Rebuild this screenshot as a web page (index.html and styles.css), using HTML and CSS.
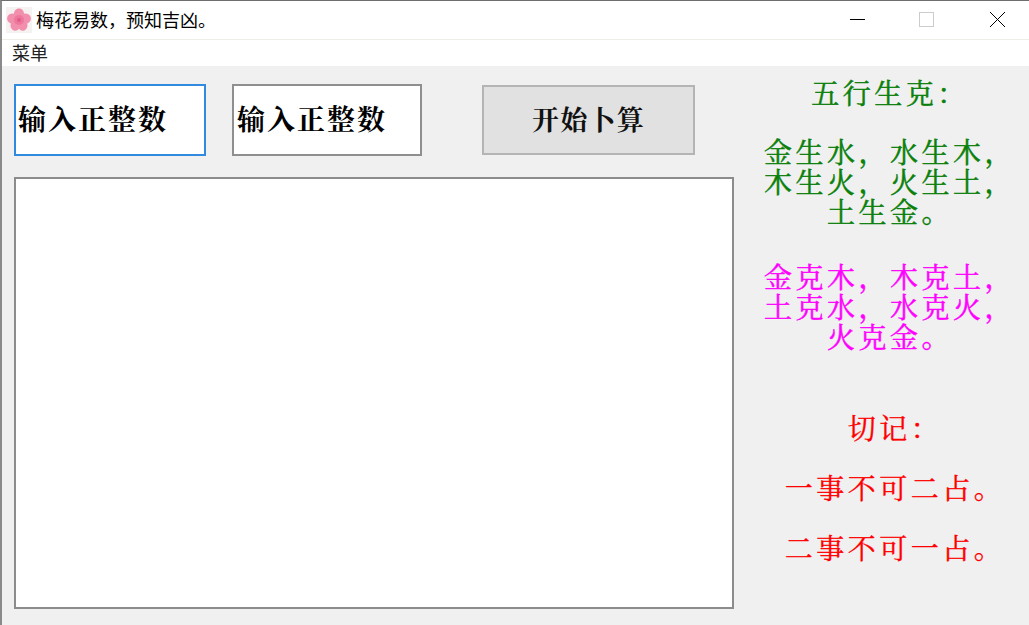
FILE: index.html
```html
<!DOCTYPE html>
<html lang="zh-CN">
<head>
<meta charset="utf-8">
<title>梅花易数，预知吉凶。</title>
<link rel="stylesheet" href="styles.css">
</head>
<body>
<div class="window">
  <header class="titlebar">
    <svg class="app-icon" viewBox="0 0 26 26" width="26" height="26" aria-hidden="true">
      <rect width="26" height="26" fill="#f6f2f2"/>
      <path d="M13 1.500c3.200 0 5 2.600 5 5.200 3-.6 6.200.8 6.800 3.800.6 2.800-1.200 5-3.600 6 .9 2.800-.1 5.800-2.900 6.900-2.200.9-4.200-.2-5.300-1.700-1.100 1.500-3.100 2.600-5.300 1.700-2.800-1.100-3.800-4.100-2.900-6.900-2.400-1-4.200-3.200-3.600-6C1.800 7.500 5 6.100 8 6.700c0-2.600 1.800-5.200 5-5.200z" fill="#f28fad"/>
      <circle cx="13" cy="13" r="5" fill="#ee789c"/>
      <circle cx="13" cy="13" r="2" fill="#e25c8a"/>
    </svg>
    <span class="title-text">梅花易数，预知吉凶。</span>
    <div class="controls">
      <svg class="ctl" viewBox="0 0 70 38" width="70" height="38" aria-hidden="true"><path d="M31 18.500h15" stroke="#000" fill="none"/></svg>
      <svg class="ctl" viewBox="0 0 70 38" width="70" height="38" aria-hidden="true"><rect x="30.500" y="11.500" width="14" height="14" stroke="#ccc" fill="none"/></svg>
      <svg class="ctl" viewBox="0 0 70 38" width="70" height="38" aria-hidden="true"><path d="M31 11l15 15M46 11l-15 15" stroke="#000" fill="none"/></svg>
    </div>
  </header>
  <nav class="menubar"><span class="menu-item">菜单</span></nav>
  <main class="client">
    <section class="work">
      <div class="inputs">
        <input class="num num-focus" type="text" value="输入正整数">
        <input class="num num-second" type="text" value="输入正整数">
        <button class="start" type="button">开始卜算</button>
      </div>
      <textarea class="output"></textarea>
    </section>
    <aside class="notes">
      <p class="note green first">五行生克：</p>
      <p class="note green gap-a">金生水，水生木，<br>木生火，火生土，<br>土生金。</p>
      <p class="note magenta gap-b">金克木，木克土，<br>土克水，水克火，<br>火克金。</p>
      <p class="note red gap-c">切记：</p>
      <p class="note red gap-d">一事不可二占。</p>
      <p class="note red gap-d">二事不可一占。</p>
    </aside>
  </main>
</div>
</body>
</html>
```
FILE: styles.css
```css
* { box-sizing: border-box; }
html, body { margin: 0; height: 100%; overflow: hidden; }
body {
  background: #f0f0f0;
  font-family: "Noto Serif CJK SC", "Liberation Serif", "Noto Sans CJK SC", serif;
}
.window {
  height: 625px;
  display: flex;
  flex-direction: column;
  border-top: 1px solid #6e6e6e;
  border-left: 2px solid #8a8a8a;
}
.titlebar {
  height: 39px;
  flex: none;
  display: flex;
  align-items: center;
  background: #fff;
  border-bottom: 1px solid #eeeee6;
  padding-left: 4px;
}
.app-icon { flex: none; margin-right: 4px; }
.title-text {
  font-family: "Noto Sans CJK SC", sans-serif;
  font-size: 18px;
  color: #000;
  line-height: 36px;
  padding-bottom: 2px;
}
.controls { margin-left: auto; display: flex; }
.ctl { display: block; }
.menubar {
  height: 26px;
  flex: none;
  background: #fff;
  padding-left: 10px;
  display: flex;
  align-items: flex-start;
}
.menu-item {
  font-family: "Noto Sans CJK SC", sans-serif;
  font-size: 18px;
  line-height: 24px;
  color: #222;
}
.client {
  flex: 1;
  min-height: 0;
  display: flex;
  background: #f0f0f0;
}
.work {
  width: 749px;
  flex: none;
  padding: 18px 0 0 12px;
  display: flex;
  flex-direction: column;
  gap: 22px;
}
.inputs { display: flex; align-items: center; height: 72px; }
.num {
  height: 72px;
  background: #fff;
  color: #000;
  border: 2px solid #8f8f8f;
  border-radius: 0;
  outline: none;
  padding: 0 0 5px 3px;
  font-family: inherit;
  font-size: 28px;
  font-weight: 700;
  letter-spacing: 2px;
}
.num-focus { width: 192px; border-color: #2f8ae0; padding-left: 2px; }
.num-second { width: 190px; margin-left: 26px; }
.start {
  width: 213px;
  height: 70px;
  margin-left: 60px;
  background: #e1e1e1;
  border: 2px solid #b4b4b4;
  border-radius: 0;
  color: #111;
  font-family: inherit;
  font-size: 27px;
  font-weight: 700;
  letter-spacing: 1.300px;
  padding: 0 0 3px;
}
.output {
  display: block;
  width: 720px;
  height: 432px;
  margin-top: -1px;
  background: #fff;
  border: 2px solid #8c8c8c;
  border-radius: 0;
  outline: none;
  resize: none;
  padding: 0;
}
.notes { flex: 1; min-width: 0; padding-top: 11px; }
.note {
  margin: 0;
  font-size: 28px;
  font-weight: 400;
  line-height: 30px;
  letter-spacing: 3.500px;
  text-align: center;
  white-space: nowrap;
  -webkit-text-stroke: 0.500px currentColor;
}
.green { color: #0a800a; }
.magenta { color: #ff00ff; }
.red { color: #ff0000; padding-left: 10px; -webkit-text-stroke-width: 0.350px; }
.gap-a { margin-top: 29px; }
.gap-b { margin-top: 35px; }
.gap-c { margin-top: 61px; }
.gap-d { margin-top: 30px; }
```
